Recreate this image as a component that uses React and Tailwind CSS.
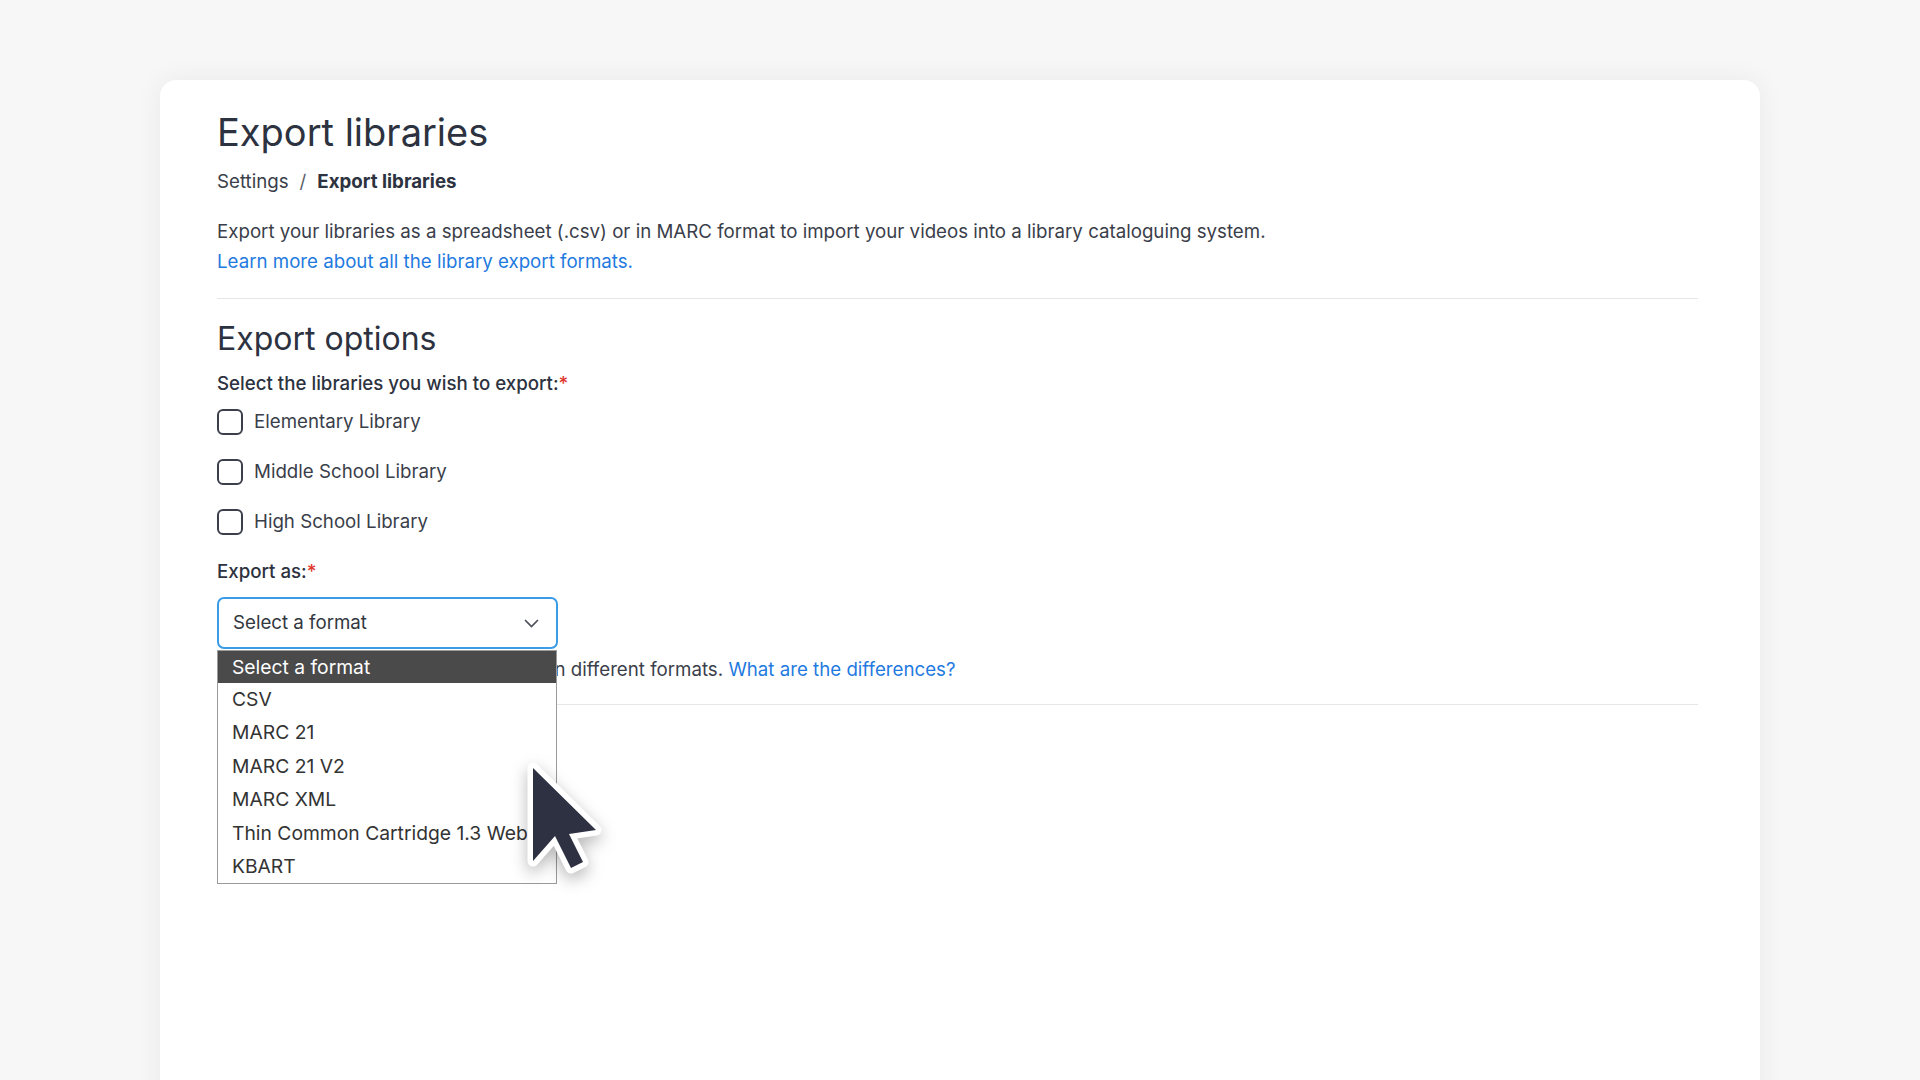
import React, { useState } from 'react';

const libraries = ['Elementary Library', 'Middle School Library', 'High School Library'];

const formats = [
  'Select a format',
  'CSV',
  'MARC 21',
  'MARC 21 V2',
  'MARC XML',
  'Thin Common Cartridge 1.3 Web',
  'KBART',
];

const Cursor = () => (
  <svg
    width="96"
    height="130"
    viewBox="0 0 96 130"
    className="absolute left-[305px] top-[160px] drop-shadow-[0_6px_8px_rgba(0,0,0,0.28)]"
  >
    {/* outline first, fill on top */}
    <polygon
      points="11,11 11,104 33,79 49,111 61,105 47,77 74,73"
      fill="#ffffff"
      stroke="#ffffff"
      strokeWidth="11"
      strokeLinejoin="round"
    />
    <polygon points="11,11 11,104 33,79 49,111 61,105 47,77 74,73" fill="#2d3142" />
  </svg>
);

const App = () => {
  const [checked, setChecked] = useState({});

  return (
    <div
      className="h-[1080px] overflow-hidden bg-[#f7f7f7] pt-[80px]"
      style={{ fontFamily: 'Inter, "Noto Sans", sans-serif' }}
    >
      <div className="ml-[160px] w-[1600px] min-h-[1100px] rounded-2xl bg-white pl-[57px] pr-[62px] pt-[28px] shadow-[0_0_28px_rgba(0,0,0,0.06)]">
        {/* Header */}
        <h1 className="text-[38px] leading-[48px] font-normal text-[#2d3240]">Export libraries</h1>
        <div className="mt-[12px] flex items-center text-[18.7px] leading-[28px] text-[#3a3e4a]">
          <span>Settings</span>
          <span className="mx-[11px] text-[#5b5f69]">/</span>
          <span className="font-bold text-[#2d3240]">Export libraries</span>
        </div>

        <div className="mt-[21px] text-[18.7px] leading-[30px] text-[#3a3e4a]">
          <p>
            Export your libraries as a spreadsheet (.csv) or in MARC format to import your videos into a library
            cataloguing system.
          </p>
          <a href="#" className="text-[#1f7ae0]">
            Learn more about all the library export formats.
          </a>
        </div>

        <div className="mt-[21px] h-px bg-[#e6e6e6]"></div>

        {/* Export options */}
        <h2 className="mt-[20px] text-[32px] leading-[40px] font-normal text-[#2d3240]">Export options</h2>

        <p className="mt-[11px] text-[18.7px] leading-[28px] font-medium text-[#2d3240]">
          Select the libraries you wish to export:<span className="text-[#e0362c]">*</span>
        </p>

        <div className="mt-[10px] flex flex-col gap-[22px]">
          {libraries.map((lib) => (
            <label key={lib} className="flex items-center gap-[11px] text-[18.7px] leading-[28px] text-[#3a3e4a]">
              <span
                onClick={() => setChecked({ ...checked, [lib]: !checked[lib] })}
                className="h-[26px] w-[26px] rounded-[6px] border-2 border-[#3b3f4b] bg-white"
              ></span>
              {lib}
            </label>
          ))}
        </div>

        <p className="mt-[22px] text-[18.7px] leading-[28px] font-medium text-[#2d3240]">
          Export as:<span className="text-[#e0362c]">*</span>
        </p>

        <div className="relative mt-[11px]">
          <div className="flex h-[52px] w-[341px] items-center justify-between rounded-[7px] border-2 border-[#3a9be6] bg-white pl-[14px] pr-[17px] text-[18.7px] text-[#333740]">
            <span>Select a format</span>
            <svg width="15" height="9" viewBox="0 0 15 9" fill="none">
              <path d="M1.5 1.5 7.5 7.5l6-6" stroke="#4b4f58" strokeWidth="1.7" strokeLinecap="round" />
            </svg>
          </div>

          <p className="mt-[7px] text-[18.7px] leading-[28px] text-[#3a3e4a]">
            All selected libraries can be exported in different formats.{' '}
            <a href="#" className="text-[#1f7ae0]">
              What are the differences?
            </a>
          </p>

          {/* Open native-style list */}
          <ul className="absolute left-0 top-[53px] w-[340px] border border-[#9b9b9b] bg-white text-[19.3px] text-[#333333]">
            {formats.map((f, i) => (
              <li
                key={f}
                className={
                  i === 0
                    ? 'h-[32px] bg-[#4a4a4a] pl-[14px] leading-[32px] text-white'
                    : 'h-[33.4px] pl-[14px] leading-[33px]'
                }
              >
                {f}
              </li>
            ))}
          </ul>

          <Cursor />
        </div>

        <div className="mt-[20px] h-px bg-[#e6e6e6]"></div>
      </div>
    </div>
  );
};

export default App;
